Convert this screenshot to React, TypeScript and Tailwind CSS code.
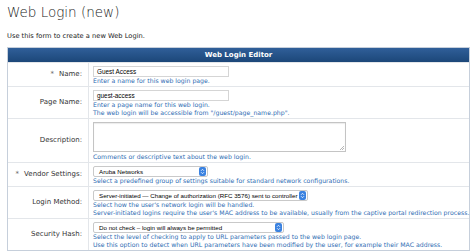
import React from 'react';

const font = { fontFamily: '"DejaVu Sans", Verdana, sans-serif' };
const fieldFont = { fontFamily: '"Liberation Sans", Arial, sans-serif' };

const Help = ({ children }: { children: React.ReactNode }) => (
  <p className="whitespace-nowrap text-[6.2px] leading-[8px] text-[#2f6db3]">{children}</p>
);

const Select = ({ value, width }: { value: string; width: string }) => (
  <div className={`flex h-[11px] items-center justify-between rounded-[2px] border border-[#c9c9c9] bg-white pl-[5px] pr-[1px] ${width}`}>
    <span className="whitespace-nowrap text-[6.2px] text-black" style={fieldFont}>{value}</span>
    <span className="flex h-[9px] w-[7px] shrink-0 items-center justify-center rounded-[2px] bg-[#3b82e0]">
      <svg width="5" height="7" viewBox="0 0 5 7">
        <path d="M1 2.8 2.5 1.3 4 2.8M1 4.2 2.5 5.7 4 4.2" fill="none" stroke="white" strokeWidth="0.8" />
      </svg>
    </span>
  </div>
);

const TextBox = ({ value }: { value: string }) => (
  <div className="h-[11px] w-[136px] border border-[#d5d5d5] pl-[3px] text-[6.4px] leading-[9px] text-black" style={fieldFont}>
    {value}
  </div>
);

const Row = ({
  label,
  required,
  children,
}: {
  label: string;
  required?: boolean;
  children: React.ReactNode;
}) => (
  <div className="flex border-t border-[#e3e6ea]">
    <div className="flex w-[81px] shrink-0 items-center justify-end gap-[5px] border-r border-[#e3e6ea] pr-[6px] text-[7px] text-[#333]">
      {required && <span className="text-[7px] text-[#666]">*</span>}
      <span>{label}</span>
    </div>
    <div className="flex-1 px-[4px] pb-[1px] pt-[3px]">{children}</div>
  </div>
);

export default function App() {
  return (
    <div className="h-[251px] w-[474px] overflow-hidden bg-white px-[7px]" style={font}>
      <h1 className="pt-[3px] text-[13.5px] font-light leading-[18px] text-[#222]">Web Login (new)</h1>
      <p className="mt-[10px] text-[6.7px] text-[#222]">Use this form to create a new Web Login.</p>

      <div className="mt-[6px] w-[463px] border border-[#c6cfdb] bg-white">
        <div className="h-[14px] bg-gradient-to-b from-[#305f99] to-[#1c4779] text-center text-[7px] font-bold leading-[14px] text-white">
          Web Login Editor
        </div>

        <Row label="Name:" required>
          <TextBox value="Guest Access" />
          <Help>Enter a name for this web login page.</Help>
        </Row>

        <Row label="Page Name:">
          <TextBox value="guest-access" />
          <Help>Enter a page name for this web login.</Help>
          <Help>The web login will be accessible from "/guest/page_name.php".</Help>
        </Row>

        <Row label="Description:">
          <div className="relative mb-[1px] h-[30px] w-[253px] border border-[#c4c4c4] shadow-[inset_0_1px_1px_rgba(0,0,0,0.08)]">
            <svg className="absolute bottom-[1px] right-[1px]" width="5" height="5" viewBox="0 0 5 5">
              <path d="M1 5 5 1M3 5 5 3" stroke="#999" strokeWidth="0.7" />
            </svg>
          </div>
          <Help>Comments or descriptive text about the web login.</Help>
        </Row>

        <Row label="Vendor Settings:" required>
          <Select value="Aruba Networks" width="w-[115px]" />
          <Help>Select a predefined group of settings suitable for standard network configurations.</Help>
        </Row>

        <Row label="Login Method:">
          <Select value="Server-initiated — Change of authorization (RFC 3576) sent to controller" width="w-[215px]" />
          <Help>Select how the user's network login will be handled.</Help>
          <Help>Server-initiated logins require the user's MAC address to be available, usually from the captive portal redirection process.</Help>
        </Row>

        <Row label="Security Hash:">
          <Select value="Do not check – login will always be permitted" width="w-[191px]" />
          <Help>Select the level of checking to apply to URL parameters passed to the web login page.</Help>
          <Help>Use this option to detect when URL parameters have been modified by the user, for example their MAC address.</Help>
        </Row>
      </div>
    </div>
  );
}
